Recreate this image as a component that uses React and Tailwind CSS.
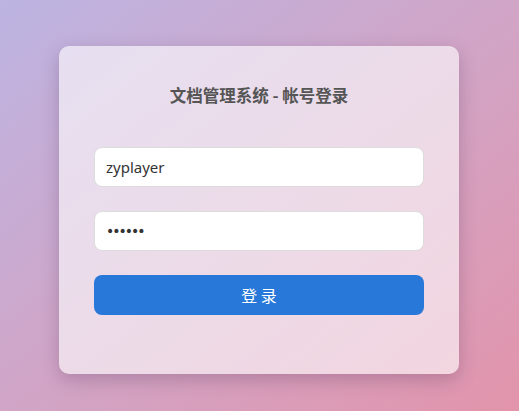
export default function App() {
  return (
    <div className="w-[519px] h-[411px] flex items-start pl-[59px] pt-[46px] bg-gradient-to-br from-[#bcb4e2] to-[#e294ab] font-['Noto_Sans','Noto_Sans_CJK_SC',sans-serif]">
      <div className="w-[400px] h-[328px] rounded-[10px] bg-white/60 shadow-[0_6px_18px_rgba(80,50,90,0.28)] px-[35px] pt-[35px]">
        <h1 className="text-center text-[16.5px] leading-[28px] font-bold text-[#555] mb-[38px] whitespace-pre font-['Noto_Sans_CJK_SC',sans-serif]">
          {'文档管理系统 - 帐号登录'}
        </h1>
        <div className="flex flex-col gap-[24px]">
          <input
            defaultValue="zyplayer"
            className="h-[40px] w-full rounded-[8px] bg-white border border-[#dcdcdc] px-[11px] text-[15px] text-[#333] outline-none"
          />
          <input
            type="password"
            defaultValue="123456"
            className="h-[40px] w-full rounded-[8px] bg-white border border-[#dcdcdc] px-[11px] text-[14px] tracking-[-2px] text-[#333] outline-none font-['DejaVu_Sans',sans-serif]"
          />
          <button className="h-[40px] w-full rounded-[8px] bg-[#2778d8] text-white text-[16px] font-['Noto_Sans_CJK_SC',sans-serif]">
            登 录
          </button>
        </div>
      </div>
    </div>
  )
}
